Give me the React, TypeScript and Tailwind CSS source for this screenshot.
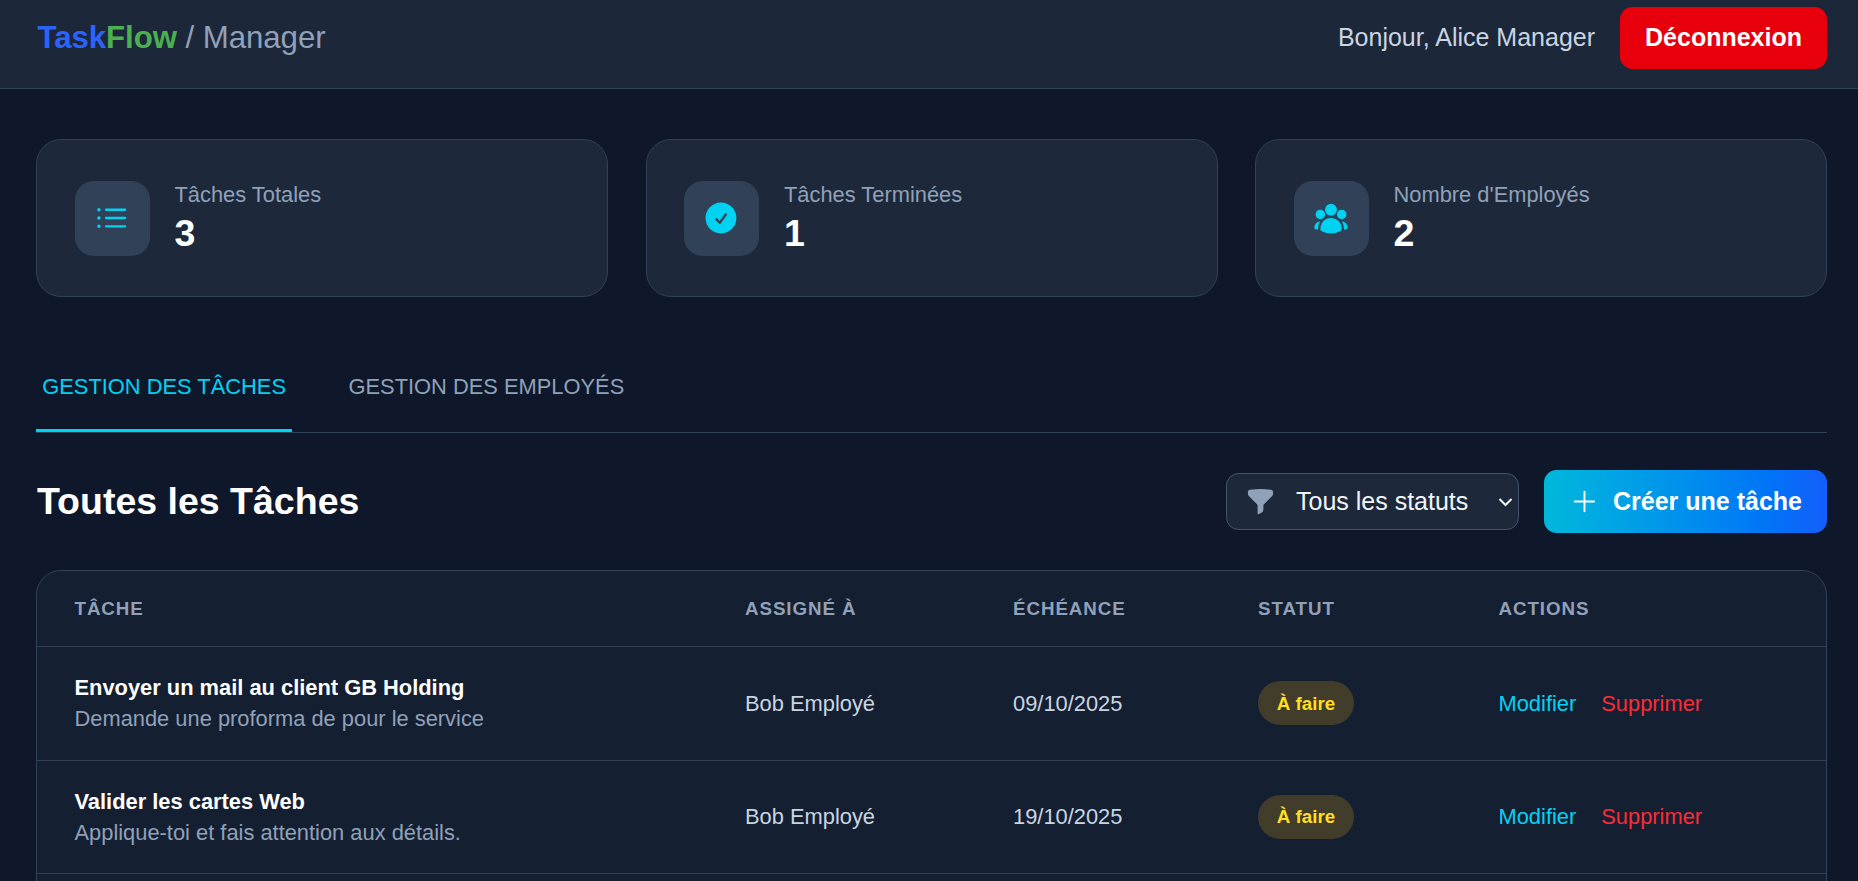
import React from "react";
import { HiCheckCircle, HiFunnel, HiOutlineListBullet, HiOutlinePlus, HiUserGroup } from "react-icons/hi2";

const stats = [
  { label: "Tâches Totales", value: "3", Icon: HiOutlineListBullet },
  { label: "Tâches Terminées", value: "1", Icon: HiCheckCircle },
  { label: "Nombre d'Employés", value: "2", Icon: HiUserGroup },
];

const tasks = [
  { title: "Envoyer un mail au client GB Holding", detail: "Demande une proforma de pour le service", who: "Bob Employé", due: "09/10/2025", status: "À faire" },
  { title: "Valider les cartes Web", detail: "Applique-toi et fais attention aux détails.", who: "Bob Employé", due: "19/10/2025", status: "À faire" },
];

const columns = "grid grid-cols-[670.5px_268px_245px_240.5px_1fr] *:pl-[37.5px]";

export default function App() {
  return (
    <div className="h-[881px] overflow-hidden bg-[#0f172a] font-['Liberation_Sans',Arial,sans-serif] text-[25px] leading-[37.5px] text-white">
      <header className="flex h-[89px] items-start justify-between border-b border-[#314158] bg-[#1c283a] pt-[7px] pr-[31px] pl-[37.5px]">
        <div className="flex h-[62px] items-center text-[31.25px] tracking-[-0.08px] whitespace-pre text-[#90a1b9]">
          <span className="font-bold text-[#2b63fb]">Task</span>
          <span className="font-bold text-[#4caf50]">Flow</span> / Manager
        </div>
        <div className="flex items-center gap-[25px]">
          <span className="text-[#cad5e2]">Bonjour, Alice Manager</span>
          <button className="h-[62px] rounded-[12.5px] bg-[#e7000b] px-[25px] font-bold">Déconnexion</button>
        </div>
      </header>

      <main className="pt-[50px] pr-[31px] pl-[36px]">
        <section className="grid grid-cols-3 gap-[37.5px]">
          {stats.map(({ label, value, Icon }) => (
            <div key={label} className="flex h-[158px] items-center gap-[25px] rounded-[25px] border border-[#314158] bg-[#1d293b] px-[37.5px]">
              <div className="flex size-[75px] items-center justify-center rounded-[18.75px] bg-[#314158] pr-px pb-px text-[#00d3f2]">
                <Icon className="size-[38px]" />
              </div>
              <div className="pt-px">
                <p className="text-[21.875px] leading-[31px] text-[#90a1b9]">{label}</p>
                <p className="-mt-px text-[37.5px] leading-[49px] font-bold">{value}</p>
              </div>
            </div>
          ))}
        </section>

        <nav className="mt-[50px] flex h-[86px] gap-[50px] border-b border-[#314158] text-[21.875px] leading-[31px] text-[#90a1b9]">
          <button className="border-b-[3px] border-[#00d3f2] px-[6.25px] pb-[3px] text-[#00d3f2]">GESTION DES TÂCHES</button>
          <button className="border-b-[3px] border-transparent px-[6.25px] pb-[3px]">GESTION DES EMPLOYÉS</button>
        </nav>

        <div className="mt-[37px] flex h-[63px] items-center justify-between">
          <h2 className="pl-px text-[37.5px] font-bold">Toutes les Tâches</h2>
          <div className="flex items-center gap-[25px]">
            <div className="flex h-[57px] w-[293px] items-center rounded-[12.5px] border border-[#45556c] bg-[#1d293b] pr-[4px] pl-[18px] text-[#f1f5f9]">
              <HiFunnel className="size-[31px] text-[#90a1b9]" />
              <span className="ml-[20px] flex-1">Tous les statuts</span>
              <svg className="size-[16px]" viewBox="0 0 16 16" fill="none" stroke="currentColor" strokeWidth="2"><path d="M1.5 5l6 6 6-6" /></svg>
            </div>
            <button className="flex h-[63px] w-[283px] items-center rounded-[12.5px] bg-linear-to-r from-[#00b8db] to-[#155dfc] pl-[25px] font-bold">
              <HiOutlinePlus className="mr-[13px] size-[31px]" />
              Créer une tâche
            </button>
          </div>
        </div>

        <section className="mt-[37px] h-[400px] rounded-[25px] border border-[#314158] bg-[#151f32]">
          <div className={`${columns} h-[76px] items-center border-b border-[#314158] text-[18.75px] leading-[25px] font-bold tracking-[0.94px] text-[#90a1b9]`}>
            <span>TÂCHE</span>
            <span>ASSIGNÉ À</span>
            <span>ÉCHÉANCE</span>
            <span>STATUT</span>
            <span>ACTIONS</span>
          </div>
          {tasks.map((t) => (
            <div key={t.title} className={`${columns} h-[113.5px] items-center border-b border-[#314158] text-[21.875px] leading-[31.25px] text-[#cad5e2]`}>
              <div>
                <p className="font-bold text-white">{t.title}</p>
                <p className="text-[#90a1b9]">{t.detail}</p>
              </div>
              <span>{t.who}</span>
              <span>{t.due}</span>
              <div className="flex">
                <span className="flex h-[44px] items-center rounded-full bg-[#423c2a] px-[18.75px] text-[18.75px] font-bold text-[#ffdf20]">{t.status}</span>
              </div>
              <div className="flex gap-[25px]">
                <a className="text-[#00d3f2]">Modifier</a>
                <a className="text-[#fb2c36]">Supprimer</a>
              </div>
            </div>
          ))}
        </section>
      </main>
    </div>
  );
}
